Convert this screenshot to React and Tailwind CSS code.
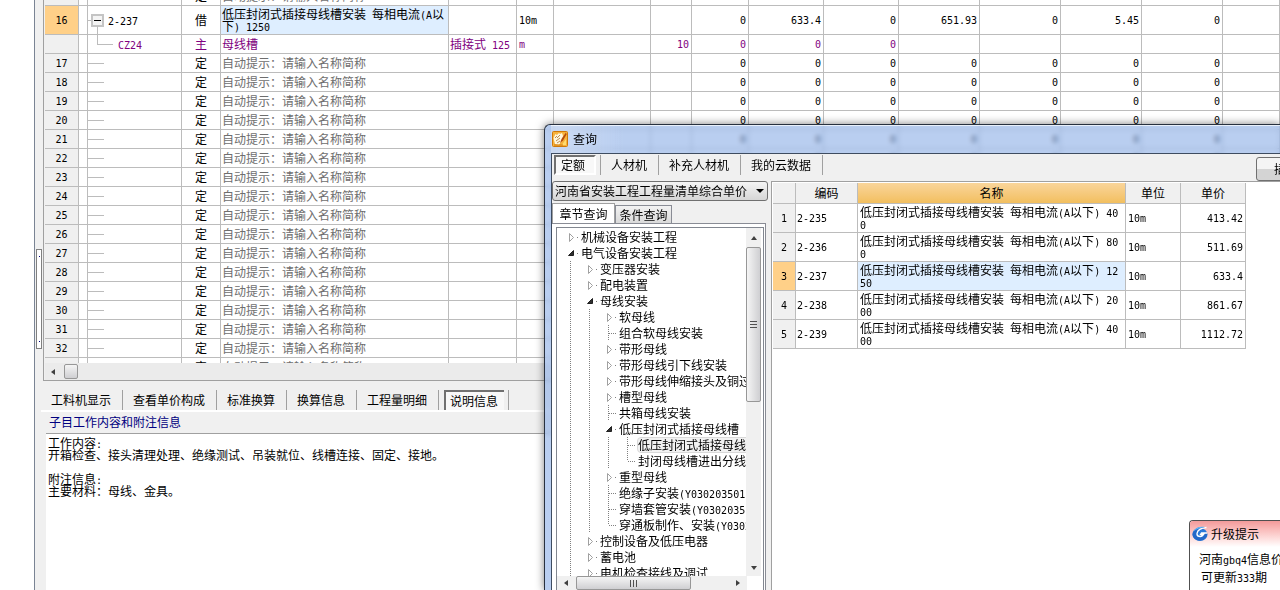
import { useState } from 'react';

const HINT = '自动提示：请输入名称简称';

const COLUMNS = [
  'w-[34px]',
  'w-[9px]',
  'w-[94px]',
  'w-[39px]',
  'w-[228px]',
  'w-[68px]',
  'w-[37px]',
  'w-[97px]',
  'w-[41px]',
  'w-[57px]',
  'w-[75px]',
  'w-[75px]',
  'w-[81px]',
  'w-[81px]',
  'w-[81px]',
  'w-[81px]',
  '',
];

const EMPTY_ROWS = [17, 18, 19, 20, 21, 22, 23, 24, 25, 26, 27, 28, 29, 30, 31, 32, 33];

const DETAIL_TABS = ['工料机显示', '查看单价构成', '标准换算', '换算信息', '工程量明细', '说明信息'];

const QUERY_TABS = ['定额', '人材机', '补充人材机', '我的云数据'];

const QUOTAS = [
  { id: 1, code: '2-235', name: '低压封闭式插接母线槽安装 每相电流(A以下) 40\n0', price: '413.42' },
  { id: 2, code: '2-236', name: '低压封闭式插接母线槽安装 每相电流(A以下) 80\n0', price: '511.69' },
  { id: 3, code: '2-237', name: '低压封闭式插接母线槽安装 每相电流(A以下) 12\n50', price: '633.4' },
  { id: 4, code: '2-238', name: '低压封闭式插接母线槽安装 每相电流(A以下) 20\n00', price: '861.67' },
  { id: 5, code: '2-239', name: '低压封闭式插接母线槽安装 每相电流(A以下) 40\n00', price: '1112.72' },
];

const CHAPTERS = [
  { depth: 0, type: 'closed', label: '机械设备安装工程' },
  { depth: 0, type: 'open', label: '电气设备安装工程' },
  { depth: 1, type: 'closed', label: '变压器安装' },
  { depth: 1, type: 'closed', label: '配电装置' },
  { depth: 1, type: 'open', label: '母线安装' },
  { depth: 2, type: 'closed', label: '软母线' },
  { depth: 2, type: 'leaf', label: '组合软母线安装' },
  { depth: 2, type: 'closed', label: '带形母线' },
  { depth: 2, type: 'closed', label: '带形母线引下线安装' },
  { depth: 2, type: 'closed', label: '带形母线伸缩接头及铜过渡板' },
  { depth: 2, type: 'closed', label: '槽型母线' },
  { depth: 2, type: 'leaf', label: '共箱母线安装' },
  { depth: 2, type: 'open', label: '低压封闭式插接母线槽' },
  { depth: 3, type: 'leaf', label: '低压封闭式插接母线槽安装', selected: true },
  { depth: 3, type: 'last', label: '封闭母线槽进出分线箱' },
  { depth: 2, type: 'closed', label: '重型母线' },
  { depth: 2, type: 'leaf', label: '绝缘子安装(Y030203501)' },
  { depth: 2, type: 'leaf', label: '穿墙套管安装(Y0302035)' },
  { depth: 2, type: 'last', label: '穿通板制作、安装(Y0302)' },
  { depth: 1, type: 'closed', label: '控制设备及低压电器' },
  { depth: 1, type: 'closed', label: '蓄电池' },
  { depth: 1, type: 'closed', label: '电机检查接线及调试' },
];

// Latin runs are set half as wide as a Chinese character
function Text({ children }) {
  return String(children)
    .split(/([\x20-\x7e]+)/)
    .map((part, i) =>
      i % 2 ? (
        <span key={i} className="whitespace-pre font-['DejaVu_Sans_Mono',monospace] text-[10px] leading-0">
          {part}
        </span>
      ) : (
        part
      )
    );
}

function Cell({ children, className = '' }) {
  const isText = typeof children === 'string';
  // numbers and codes sit a little above the middle of the row
  const isLatin = isText && /^[\x20-\x7e]+$/.test(children);
  return (
    <td
      className={`overflow-hidden whitespace-pre border-r border-b border-[#bcbcbc] pt-0 ${isLatin ? 'pb-[2px]' : 'pb-0'} ${className}`}
    >
      {isText ? <Text>{children}</Text> : children}
    </td>
  );
}

function Numbers({ values }) {
  return values.map((value, i) => (
    <Cell key={i} className="pr-[2px] text-right">
      {value}
    </Cell>
  ));
}

function EmptyRow({ number }) {
  return (
    <tr className="h-[19px]">
      <Cell className="bg-[#f0f0f0] text-center">{String(number)}</Cell>
      <Cell />
      <Cell>
        <div className="h-px w-4 bg-[#bcbcbc]" />
      </Cell>
      <Cell className="text-center">定</Cell>
      <Cell className="pl-px text-[#6e6e6e]">{HINT}</Cell>
      <Numbers values={['', '', '', '', '0', '0', '0', '0', '0', '0', '0', '']} />
    </tr>
  );
}

function BudgetGrid() {
  return (
    <div className="h-[363px] shrink-0 overflow-hidden bg-white">
      <table className="-mt-[13px] w-full table-fixed border-separate border-spacing-0 leading-3">
        <colgroup>
          {COLUMNS.map((width, i) => (
            <col key={i} className={width} />
          ))}
        </colgroup>
        <tbody>
          <EmptyRow number={15} />
          <tr className="h-[29px]">
            <Cell className="bg-[#ffd088] text-center">16</Cell>
            <Cell />
            <Cell>
              <div className="relative flex h-7 items-center">
                <div className="h-px w-[3px] bg-[#bcbcbc]" />
                <button
                  aria-label="折叠"
                  className="flex size-[13px] items-center justify-center border-2 border-[#c4c4c4] bg-[#f4f4f4]"
                >
                  <span className="h-px w-[7px] bg-black" />
                </button>
                <span className="ml-1">
                  <Text>2-237</Text>
                </span>
                <div className="absolute bottom-0 left-[9px] h-2 w-px bg-[#bcbcbc]" />
              </div>
            </Cell>
            <Cell className="text-center">借</Cell>
            <Cell className="bg-[#deeeff] pl-px">{'低压封闭式插接母线槽安装 每相电流(A以\n下) 1250'}</Cell>
            <Cell />
            <Cell className="pl-[2px]">10m</Cell>
            <Numbers values={['', '', '0', '633.4', '0', '651.93', '0', '5.45', '0', '']} />
          </tr>
          <tr className="h-[19px] text-[#800080]">
            <Cell className="bg-[#f0f0f0]" />
            <Cell />
            <Cell>
              <div className="flex h-[18px]">
                <div className="ml-[9px] h-[10px] w-4 border-b border-l border-[#bcbcbc]" />
                <span className="ml-[5px] leading-[18px]">
                  <Text>CZ24</Text>
                </span>
              </div>
            </Cell>
            <Cell className="text-center">主</Cell>
            <Cell className="pl-px">母线槽</Cell>
            <Cell className="pl-px">插接式 125</Cell>
            <Cell className="pl-[2px]">m</Cell>
            <Numbers values={['', '10', '0', '0', '0', '', '', '', '', '']} />
          </tr>
          {EMPTY_ROWS.map((number) => (
            <EmptyRow key={number} number={number} />
          ))}
        </tbody>
      </table>
    </div>
  );
}

function DetailPanel() {
  const [active, setActive] = useState('说明信息');

  return (
    <div className="flex min-h-0 flex-1 flex-col">
      <div className="-ml-[2px] flex h-[31px] shrink-0 items-center border-b-2 border-white pt-2">
        {DETAIL_TABS.map((tab) => (
          <div key={tab} className="flex h-5 items-center border-r border-[#a0a0a0]">
            {tab === active ? (
              <button className="mr-1 ml-[5px] h-5 border-t-2 border-l-2 border-[#707070] bg-[#f8f8f8] pr-[6px] pl-1">
                {tab}
              </button>
            ) : (
              <button className="pr-[11px] pl-[10px]" onClick={() => setActive(tab)}>
                {tab}
              </button>
            )}
          </div>
        ))}
      </div>
      <h2 className="ml-[3px] h-[22px] shrink-0 border-b border-[#a0a0a0] pl-[3px] leading-[20px] text-[#000080]">
        子目工作内容和附注信息
      </h2>
      <div className="ml-[3px] flex-1 bg-white pt-[3px] pl-[2px] leading-3">
        <p>
          <Text>工作内容:</Text>
        </p>
        <p>开箱检查、接头清理处理、绝缘测试、吊装就位、线槽连接、固定、接地。</p>
        <p className="mt-3">
          <Text>附注信息:</Text>
        </p>
        <p>主要材料：母线、金具。</p>
      </div>
    </div>
  );
}

function Triangle({ direction, className = '' }) {
  const points = {
    left: '5,0 5,6 1,3',
    right: '1,0 1,6 5,3',
    up: '0,5 6,5 3,1',
    down: '0,1 6,1 3,5',
  };
  return (
    <svg viewBox="0 0 6 6" className={`size-[6px] fill-[#404040] ${className}`} aria-hidden="true">
      <polygon points={points[direction]} />
    </svg>
  );
}

function TreeToggle({ type }) {
  return (
    <svg viewBox="0 0 19 16" className="h-4 w-[19px] shrink-0" aria-hidden="true">
      {type === 'closed' && <path d="M8.5 4.5v8l4-4z" fill="#fff" stroke="#a0a0a0" />}
      {type === 'open' && <path d="M12.5 5.5v5h-5z" fill="#303030" stroke="#202020" />}
      {(type === 'closed' || type === 'open') && <path d="M16 8h1v1h-1z" fill="#808080" />}
      {type === 'leaf' && <path d="M9.5 0v16" stroke="#808080" strokeDasharray="1 1" />}
      {type === 'last' && <path d="M9.5 0v8" stroke="#808080" strokeDasharray="1 1" />}
      {(type === 'leaf' || type === 'last') && <path d="M10 8.5h8" stroke="#808080" strokeDasharray="1 1" />}
      {type === 'guide' && <path d="M9.5 0v16" stroke="#808080" strokeDasharray="1 1" />}
    </svg>
  );
}

function ChapterTree() {
  return (
    <div className="flex min-h-0 flex-1 flex-col border border-b-0 border-[#828790] bg-white">
      <div className="flex min-h-0 flex-1">
        <ul className="min-w-0 flex-1 overflow-hidden pt-px pl-1">
          {CHAPTERS.map((item) => (
            <li key={item.label} className="flex h-4 items-center whitespace-nowrap">
              {[...Array(item.depth)].map((_, i) => (
                <TreeToggle key={i} type="guide" />
              ))}
              <TreeToggle type={item.type} />
              <span
                className={
                  item.selected
                    ? 'h-4 rounded-sm border border-[#d9d9d9] bg-[#f2f2f2] leading-[14px]'
                    : 'pl-px leading-4'
                }
              >
                <Text>{item.label}</Text>
              </span>
            </li>
          ))}
        </ul>
        <div className="flex w-[15px] shrink-0 flex-col items-center bg-[#f0f0f0] pt-[7px]">
          <Triangle direction="up" />
          <div className="mt-[6px] flex h-[155px] w-full flex-col items-center justify-center gap-[2px] rounded-[2px] border border-[#979797] bg-linear-to-r from-[#f5f5f5] to-[#cfcfd2]">
            <span className="h-px w-[7px] bg-[#505050]" />
            <span className="h-px w-[7px] bg-[#505050]" />
            <span className="h-px w-[7px] bg-[#505050]" />
          </div>
          <Triangle direction="down" className="mt-auto mb-[5px]" />
        </div>
        <div className="w-[2px]" />
      </div>
      <div className="mr-4 flex h-[14px] shrink-0 items-center bg-[#f0f0f0] pl-[6px]">
        <Triangle direction="left" />
        <div className="ml-[7px] flex h-[14px] w-[115px] items-center justify-center gap-[2px] rounded-[2px] border border-[#979797] bg-linear-to-b from-[#f5f5f5] to-[#cfcfd2]">
          <span className="h-[7px] w-px bg-[#505050]" />
          <span className="h-[7px] w-px bg-[#505050]" />
          <span className="h-[7px] w-px bg-[#505050]" />
        </div>
        <Triangle direction="right" className="mr-[6px] ml-auto" />
      </div>
    </div>
  );
}

function QuotaTable() {
  return (
    <div className="min-w-0 flex-1 overflow-hidden border-t border-l border-[#a0a0a0] bg-white pt-px pl-px">
      <table className="w-[473px] table-fixed border-separate border-spacing-0 leading-3">
        <colgroup>
          <col className="w-[23px]" />
          <col className="w-[62px]" />
          <col className="w-[268px]" />
          <col className="w-[55px]" />
          <col className="w-[65px]" />
        </colgroup>
        <thead>
          <tr className="h-[21px] bg-[#f0f0f0] *:border-r *:border-b *:border-[#bcbcbc] *:p-0 *:font-normal">
            <th aria-label="序号" />
            <th>编码</th>
            <th className="bg-linear-to-b from-[#fad59a] to-[#f2bf5e]">名称</th>
            <th>单位</th>
            <th>单价</th>
          </tr>
        </thead>
        <tbody>
          {QUOTAS.map((quota) => (
            <tr key={quota.id} className="h-[29px]">
              <Cell className={quota.id === 3 ? 'bg-[#ffd088] text-center' : 'bg-[#f0f0f0] text-center'}>
                {String(quota.id)}
              </Cell>
              <Cell className="pl-px">{quota.code}</Cell>
              <Cell className={quota.id === 3 ? 'bg-[#deeeff] pl-[2px]' : 'pl-[2px]'}>{quota.name}</Cell>
              <Cell className="pl-[2px]">10m</Cell>
              <Cell className="pr-[2px] text-right">{quota.price}</Cell>
            </tr>
          ))}
        </tbody>
      </table>
    </div>
  );
}

function QueryWindow() {
  const [tab, setTab] = useState('定额');

  return (
    <section className="absolute top-[124px] right-0 bottom-0 left-[544px] flex flex-col overflow-hidden rounded-tl-md border-t border-l border-[#28313f] bg-[#8aade6]/60 pl-[6px] shadow-[0_0_8px_rgba(0,0,0,0.5)] backdrop-blur-[2px]">
      <header className="flex h-7 shrink-0 items-center border-t border-white/70 bg-linear-to-r from-white/30 to-transparent to-10% pb-px">
        <svg viewBox="0 0 16 16" className="ml-px size-4" aria-hidden="true">
          <rect x="0.5" y="0.5" width="15" height="15" rx="1" fill="#f6b23c" stroke="#d07808" />
          <path d="M1.500 7l2-4 1.500 1 2-2 1 1 2-1 1 3-1 4-3 5-4-1z" fill="#fff6dc" />
          <path d="M3 7l2-2M5 7l3-3M4 10l4-3M5 12l3-2" stroke="#a8702c" strokeWidth="0.8" />
          <path d="M14 1.500L9.500 8 8 12l3-2.500 3.500-6z" fill="#b54a0c" />
          <path d="M10.500 13l3.500-5v6H9z" fill="#ffdc70" />
          <path d="M2 14h9" stroke="#d07808" />
        </svg>
        <h1 className="ml-[5px]">查询</h1>
      </header>
      <div className="flex min-h-0 flex-1 flex-col border-t border-l border-[#3e4c60] bg-[#f0f0f0]">
        <div className="flex h-[27px] shrink-0 items-start pt-px">
          {QUERY_TABS.map((name) => (
            <div key={name} className="flex h-5 items-center border-r border-[#a0a0a0]">
              {name === tab ? (
                <button className="mr-1 ml-[2px] h-5 border-2 border-t-[#707070] border-r-white border-b-white border-l-[#707070] bg-[#f8f8f8] pr-[9px] pl-[5px] leading-4">
                  {name}
                </button>
              ) : (
                <button className="pr-[11px] pl-[10px]" onClick={() => setTab(name)}>
                  {name}
                </button>
              )}
            </div>
          ))}
          <button className="mt-[2px] -mr-9 ml-auto h-6 w-[60px] shrink-0 rounded-[3px] border border-[#707070] bg-linear-to-b from-[#f4f4f4] from-50% to-[#d4d4d4] to-50%">
            插入
          </button>
        </div>
        <div className="flex min-h-0 flex-1">
          <div className="mr-[3px] flex w-[216px] shrink-0 flex-col">
            <div className="relative">
              <select
                aria-label="定额库"
                className="block h-5 w-full appearance-none rounded-[3px] border border-[#707070] bg-linear-to-b from-[#f4f4f4] to-[#d6d6d6] pl-[2px] leading-4"
              >
                <option>河南省安装工程工程量清单综合单价</option>
              </select>
              <svg viewBox="0 0 8 4" className="pointer-events-none absolute top-2 right-1 h-1 w-2" aria-hidden="true">
                <path d="M0 0h8L4 4z" />
              </svg>
            </div>
            <div className="mt-[2px] flex items-end">
              <button className="-mb-px h-[21px] w-[63px] border border-b-0 border-[#a0a0a0] bg-white pb-px">
                章节查询
              </button>
              <button className="h-[18px] w-[57px] border border-b-0 border-[#898c95] bg-linear-to-b from-[#f2f2f2] to-[#dadada]">
                条件查询
              </button>
            </div>
            <div className="mr-[2px] flex min-h-0 flex-1 flex-col border-t border-r border-[#898c95] bg-white pt-[3px] pr-px pl-1">
              <ChapterTree />
            </div>
          </div>
          <QuotaTable />
        </div>
      </div>
    </section>
  );
}

function UpgradeToast() {
  return (
    <aside className="absolute right-0 bottom-0 left-[1189px] h-[70px] overflow-hidden rounded-tl-sm border-t border-l border-[#505050] bg-white whitespace-nowrap">
      <div className="flex h-[26px] items-center bg-linear-to-b from-[#f29a9a] to-white pl-[2px]">
        <svg viewBox="0 0 16 16" className="size-4" aria-hidden="true">
          <ellipse cx="8" cy="8.500" rx="7.500" ry="6.500" fill="#2a78d8" />
          <path d="M0.500 8C1 3 7 0 14 1.500 10 2 6 3 4.500 6 3 10 6 12 9 11.500c2-.3 3-1.500 3-3H8.500l1-1.500H15c.5 4-3 7.500-7 7.500S0.500 12 0.500 8z" fill="#2468c8" />
          <path d="M14.500 1.500C9 2 5.500 4 5 7.500c-.3 3 4 4.500 6.500 1H8.500L9.500 7H15" fill="none" stroke="#fff" strokeWidth="1.300" />
          <path d="M1 6C3 2 8 0 13 1.200 8 1.500 4 3 1 6z" fill="#5db4f7" />
        </svg>
        <strong className="ml-[3px] font-normal">升级提示</strong>
      </div>
      <p className="pt-[3px] pl-[9px] leading-[18px]">
        <Text>河南gbq4信息价</Text>
      </p>
      <p className="pl-[11px] leading-[18px]">
        <Text>可更新333期</Text>
      </p>
    </aside>
  );
}

export default function App() {
  return (
    <main className="relative flex h-screen overflow-hidden bg-[#f0f0f0] font-['Noto_Sans_CJK_SC',sans-serif] text-xs text-black">
      <div className="w-[35px] shrink-0 border-r border-[#7a8494] bg-white" />
      <div className="w-2 shrink-0 pt-[249px] pl-px">
        <div className="flex h-[100px] w-[6px] flex-col items-center justify-between border border-[#808080] bg-white py-[6px]">
          <span className="size-px bg-[#000080]" />
          <span className="size-px bg-[#000080]" />
        </div>
      </div>
      <div className="flex min-w-0 flex-1 flex-col">
        <div className="shrink-0 border-b border-l border-[#a0a0a0] pl-px">
          <BudgetGrid />
          <div className="flex h-[17px] items-center bg-[#ebebeb] pl-[5px]">
            <Triangle direction="left" />
            <div className="ml-2 h-[15px] w-[14px] rounded-[2px] border border-[#979797] bg-linear-to-b from-[#f5f5f5] to-[#cfcfd2]" />
          </div>
        </div>
        <DetailPanel />
      </div>
      <QueryWindow />
      <UpgradeToast />
    </main>
  );
}
